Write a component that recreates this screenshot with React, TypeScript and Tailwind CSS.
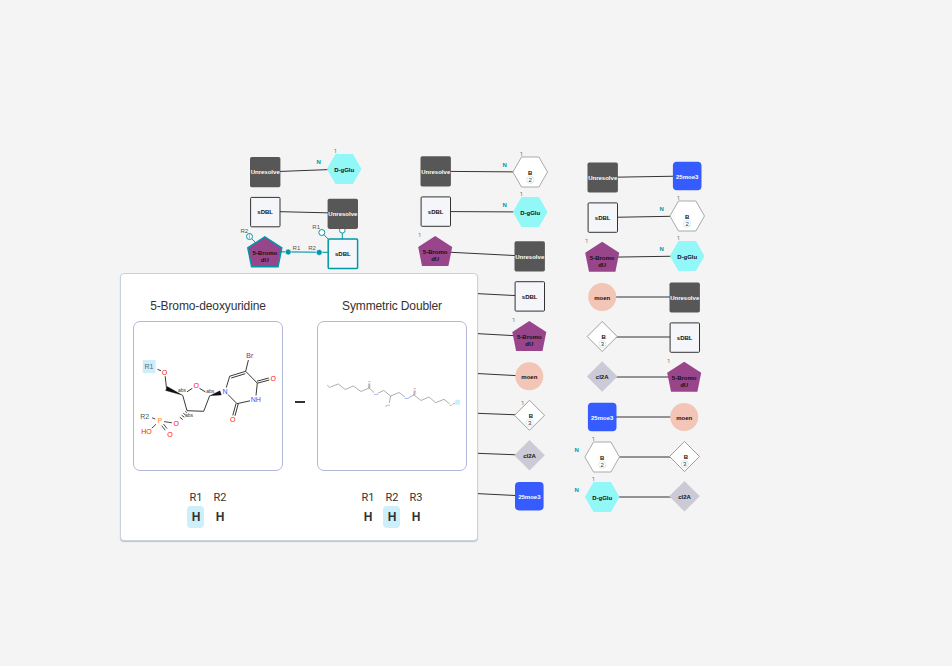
import React from "react";

type Kind = "unresolved" | "sdbl" | "bromo" | "gglu" | "hexB" | "diaB" | "moen" | "cl2a" | "moe3";
type NodeSpec = { kind: Kind; x: number; y: number; active?: boolean };

const label = "font-bold text-[6px]";

function Lines({ x, y, text, fill = "#111" }: { x: number; y: number; text: string; fill?: string }) {
  return (
    <text x={x} y={y} textAnchor="middle" fill={fill} className={label}>
      {text}
    </text>
  );
}

function Ordinal({ x, y }: { x: number; y: number }) {
  return (
    <text x={x} y={y} fill="#777" textAnchor="middle" className="font-['Roboto',sans-serif] text-[6px]">
      1
    </text>
  );
}

function Count({ x, y, n }: { x: number; y: number; n: string }) {
  return (
    <>
      <circle cx={x} cy={y} r={3.6} fill="#fff" stroke="#c4e9ef" strokeWidth={0.8} />
      <text x={x} y={y + 2.2} textAnchor="middle" fill="#333" className="text-[6px]">
        {n}
      </text>
    </>
  );
}

function Monomer({ kind, x, y, active }: NodeSpec) {
  const hex = "-17.3,0 -8.7,-15 8.7,-15 17.3,0 8.7,15 -8.7,15";
  return (
    <g transform={`translate(${x} ${y})`}>
      {kind === "unresolved" && (
        <>
          <rect x={-15.2} y={-15} width={30.4} height={30.2} rx={1.8} fill="#585757" />
          <Lines x={0} y={2.3} text="Unresolve" fill="#fff" />
        </>
      )}
      {kind === "sdbl" && (
        <>
          <rect
            x={-14.6}
            y={-14.6}
            width={29.4}
            height={29.4}
            rx={1}
            fill="#f5f6f9"
            stroke={active ? "#0097a8" : "#333"}
            strokeWidth={active ? 1.5 : 1}
          />
          <Lines x={0} y={2.3} text="sDBL" />
        </>
      )}
      {kind === "bromo" && (
        <>
          <polygon
            points="0,-15.5 17,-4.5 13.2,14.5 -13.2,14.5 -17,-4.5"
            fill="#99458b"
            stroke={active ? "#0097a8" : "none"}
            strokeWidth={1.5}
          />
          <Lines x={0} y={2.6} text="5-Bromo" />
          <Lines x={0} y={9.6} text="dU" />
          {!active && <Ordinal x={-15.5} y={-14.8} />}
        </>
      )}
      {kind === "gglu" && (
        <>
          <polygon points={hex} fill="#92f7f7" />
          <Lines x={0} y={3} text="D-gGlu" />
          <Ordinal x={-8.7} y={-16} />
          <text x={-25.5} y={-5} textAnchor="middle" fill="#0097a8" className={label}>
            N
          </text>
        </>
      )}
      {kind === "hexB" && (
        <>
          <polygon points={hex} fill="#fff" stroke="#aaa" strokeWidth={1} />
          <Lines x={0} y={2.8} text="B" />
          <Count x={0} y={7.8} n="2" />
          <Ordinal x={-8.7} y={-16} />
          <text x={-25.5} y={-5} textAnchor="middle" fill="#0097a8" className={label}>
            N
          </text>
        </>
      )}
      {kind === "diaB" && (
        <>
          <polygon points="0,-15 15,0 0,15 -15,0" fill="#fff" stroke="#888" strokeWidth={0.8} />
          <Lines x={1.5} y={2.6} text="B" />
          <Count x={0.2} y={7.5} n="3" />
        </>
      )}
      {kind === "moen" && (
        <>
          <circle r={14} fill="#f3c5b6" />
          <Lines x={0} y={2.8} text="moen" />
        </>
      )}
      {kind === "cl2a" && (
        <>
          <polygon points="0,-15.3 15.3,0 0,15.3 -15.3,0" fill="#cccad6" />
          <Lines x={0} y={2.6} text="cl2A" />
        </>
      )}
      {kind === "moe3" && (
        <>
          <rect x={-14.3} y={-14.2} width={28.6} height={28.4} rx={4} fill="#365cff" />
          <Lines x={0} y={2.8} text="25moe3" fill="#fff" />
        </>
      )}
    </g>
  );
}

const chains: [NodeSpec, NodeSpec][] = [
  [{ kind: "unresolved", x: 265.2, y: 172 }, { kind: "gglu", x: 344.2, y: 169 }],
  [{ kind: "unresolved", x: 435.7, y: 171.3 }, { kind: "hexB", x: 530.2, y: 172 }],
  [{ kind: "sdbl", x: 435.7, y: 211.5 }, { kind: "gglu", x: 530.2, y: 212 }],
  [{ kind: "bromo", x: 435.2, y: 251.5 }, { kind: "unresolved", x: 529.7, y: 256.3 }],
  [{ kind: "unresolved", x: 435, y: 291.5 }, { kind: "sdbl", x: 529.7, y: 296.3 }],
  [{ kind: "sdbl", x: 435, y: 331.3 }, { kind: "bromo", x: 529.3, y: 336.5 }],
  [{ kind: "sdbl", x: 435, y: 371.3 }, { kind: "moen", x: 529.3, y: 376.3 }],
  [{ kind: "sdbl", x: 435, y: 411.7 }, { kind: "diaB", x: 529.5, y: 415.3 }],
  [{ kind: "sdbl", x: 435, y: 451.7 }, { kind: "cl2a", x: 529.5, y: 455.3 }],
  [{ kind: "sdbl", x: 435, y: 491.5 }, { kind: "moe3", x: 529.3, y: 496.2 }],
  [{ kind: "unresolved", x: 602.7, y: 177.4 }, { kind: "moe3", x: 687.2, y: 176 }],
  [{ kind: "sdbl", x: 602.7, y: 217.5 }, { kind: "hexB", x: 687.2, y: 216 }],
  [{ kind: "bromo", x: 602.2, y: 257.3 }, { kind: "gglu", x: 687.2, y: 256 }],
  [{ kind: "moen", x: 602.2, y: 297 }, { kind: "unresolved", x: 684.7, y: 297.4 }],
  [{ kind: "diaB", x: 602.2, y: 336.5 }, { kind: "sdbl", x: 684.7, y: 337.5 }],
  [{ kind: "cl2a", x: 602.2, y: 376.5 }, { kind: "bromo", x: 684.2, y: 377.3 }],
  [{ kind: "moe3", x: 602.2, y: 417 }, { kind: "moen", x: 684.2, y: 417 }],
  [{ kind: "hexB", x: 602.2, y: 457 }, { kind: "diaB", x: 684.5, y: 456.5 }],
  [{ kind: "gglu", x: 602.2, y: 497 }, { kind: "cl2a", x: 684.5, y: 496.3 }],
];

function Canvas() {
  return (
    <svg width={952} height={666} viewBox="0 0 952 666" className="block font-['Liberation_Sans',Arial,sans-serif]">
      {chains.map(([a, b], i) => {
        const level = i > 12;
        return (
          <g key={i}>
            <line
              x1={a.x}
              y1={level ? Math.round(a.y + 0.1) : a.y}
              x2={b.x}
              y2={level ? Math.round(a.y + 0.1) : b.y}
              stroke="#333"
              strokeWidth={1}
            />
            <Monomer {...a} />
            <Monomer {...b} />
            {i === 7 && <Ordinal x={522.8} y={405} />}
          </g>
        );
      })}
      <line x1={265} y1={211.3} x2={342} y2={213.2} stroke="#333" />
      <Monomer kind="sdbl" x={265.2} y={212} />

      <g stroke="#0097a8" fill="none">
        <line x1={265} y1={251.7} x2={342} y2={252.5} strokeWidth={1.2} />
        <line x1={342.3} y1={233} x2={342.3} y2={240} />
        <circle cx={342.3} cy={230.3} r={2.8} fill="#fff" />
        <line x1={324} y1={234.8} x2={329} y2={240} stroke="#537b82" />
        <circle cx={321.8} cy={232.5} r={3} fill="#fff" />
        <line x1={251.5} y1={238.6} x2={256} y2={243} stroke="#537b82" />
        <circle cx={249.5} cy={236.5} r={3} fill="#fff" />
      </g>
      <line x1={249.5} y1={234.3} x2={249.5} y2={238.5} stroke="#888" strokeWidth={0.7} />
      <circle cx={288.2} cy={252} r={3} fill="#0097a8" stroke="#f4f4f4" strokeWidth={0.7} />
      <circle cx={319.2} cy={252.4} r={3} fill="#0097a8" stroke="#f4f4f4" strokeWidth={0.7} />
      <Monomer kind="unresolved" x={342.8} y={213.7} />
      <Monomer kind="bromo" x={264.8} y={252.3} active />
      <Monomer kind="sdbl" x={342.8} y={253.6} active />
      <g fill="#555" textAnchor="middle" className="text-[6px]">
        <text x={244.3} y={233}>R2</text>
        <text x={316.2} y={229.3}>R1</text>
        <text x={296.4} y={250.3}>R1</text>
        <text x={312} y={250.3}>R2</text>
      </g>
    </svg>
  );
}

function Bromodeoxyuridine() {
  return (
    <svg width={148} height={148} viewBox="134 322 148 148" className="block font-['Liberation_Sans',Arial,sans-serif]">
      <rect x={142.7} y={360} width={13} height={13} rx={1} fill="#cdeffc" />
      <g stroke="#222" strokeWidth={0.9} fill="none">
        <path d="M157.5 369.3L161 370.8M165.2 376.3L166.5 388.5M182.7 395.3L187 410.7L203.7 411.3L209.7 395.7M187 391.8L192.3 388.3M199.5 388.3L205.5 392" />
        <path d="M226.3 387.5L229.7 376.2L245.7 371.3L257.3 383.2L256 395.5M245.7 371.3L248.4 360M231.2 378L245.3 373.7" />
        <path d="M257.3 383.2L269.3 380M256.9 381.2L268.8 378M250 400.8L237 403.7L228 394.5M236 403.5L232.8 415.4M238.2 404L235 415.8" />
        <path d="M152 417.8L155.3 419M164 421.6L172 422.8M156 424.2L151.8 428.2M161.7 425.6L165.2 430.2M163.5 424L167 428.6" strokeWidth={0.8} />
        <path d="M185.3 411.5L186.8 412.6M183.3 413.2L185.5 415M181.6 415.2L184.3 417.3M179.8 417.2L182.7 419.6" strokeWidth={0.9} />
      </g>
      <path d="M182.7 395.3L167.3 386.5L165.6 390.5ZM209.7 395.7L220 390.8L221.4 395Z" fill="#111" stroke="#111" strokeWidth={0.3} />
      <g textAnchor="middle" className="text-[7px]">
        <g fill="#5a6a70">
          <text x={149} y={369.2}>R1</text>
          <text x={144.8} y={419} fill="#555">R2</text>
        </g>
        <g fill="#ff0d0d">
          <text x={164.4} y={375.2}>O</text>
          <text x={196.2} y={388.3}>O</text>
          <text x={273.2} y={381.2}>O</text>
          <text x={232.7} y={422.3}>O</text>
          <text x={176.3} y={426.2}>O</text>
          <text x={170} y={437}>O</text>
          <text x={146.4} y={434.4}>HO</text>
        </g>
        <text x={249.8} y={358.3} fill="#a62929">Br</text>
        <text x={159.8} y={423.4} fill="#ff8000">P</text>
        <g fill="#3050f8">
          <text x={225} y={394}>N</text>
          <text x={255.7} y={402.3}>NH</text>
        </g>
      </g>
      <g textAnchor="middle" fill="#333" className="text-[5px]">
        <text x={182} y={392.3}>abs</text>
        <text x={210.3} y={392.9}>abs</text>
        <text x={189} y={417.2}>abs</text>
      </g>
    </svg>
  );
}

function SymmetricDoubler() {
  return (
    <svg width={148} height={148} viewBox="318 322 148 148" className="block">
      <rect x={455.2} y={399.8} width={5} height={5} fill="#cdeffc" />
      <g fill="none" stroke="#777" strokeWidth={0.6}>
        <path d="M327.2 385.2L329 386.6M330.8 386.8L338.3 384L345.3 389.5L353.3 386L361 391.5L369 388L374 392.5M377.8 393.3L383.7 390.5L390.7 396L399 392.5L405 397M408.5 397.8L414 395L421 400.5L429 397L435.7 402.7L444 399.3L449.7 404M452.5 404.5L455 403" />
        <path d="M368.7 388L368.9 383.5M369.7 388L369.9 383.5M413.8 395L414.2 390.5M414.8 395L415.2 390.5M390.7 396L389.3 403M387.5 405.3L385.3 406.3" />
      </g>
      <g fill="none" strokeWidth={1}>
        <path d="M328.8 387.2h2M368.3 381.7h2.2M413.7 388.7h2.2M388 405.3h2M449.7 405.3h2" stroke="#f3a19e" />
        <path d="M374 394.4h4M404.7 398.5h4" stroke="#a9b7ff" />
      </g>
    </svg>
  );
}

function Monocard({ title, children, groups, selected }: { title: string; children: React.ReactNode; groups: string[]; selected: string }) {
  return (
    <section className="flex w-[150px] flex-col items-center">
      <h2 className="h-[22px] whitespace-nowrap text-[12px] leading-[14px] tracking-[-0.12px]">{title}</h2>
      <div className="size-[150px] shrink-0 overflow-hidden rounded-[7px] border border-[#b3b8d8]">{children}</div>
      <div className="mr-px mt-5 flex gap-[7px]">
        {groups.map((g) => (
          <div key={g} className="flex w-[17px] flex-col items-center">
            <span className="pl-px font-['Roboto',sans-serif] text-[11px] leading-[14px]">{g}</span>
            <span
              className={
                g === selected
                  ? "mt-px flex h-[22px] w-[17px] items-center justify-center rounded-[4px] bg-[#cdeffc] pl-px text-[12px] font-bold"
                  : "mt-px flex h-[22px] w-[17px] items-center justify-center pl-px text-[12px] font-bold"
              }
            >
              H
            </span>
          </div>
        ))}
      </div>
    </section>
  );
}

export default function App() {
  return (
    <main className="relative h-[666px] w-[952px] overflow-hidden bg-[#f4f4f4] font-['Liberation_Sans',Arial,sans-serif] text-[#333]">
      <Canvas />
      <div className="absolute left-[120px] top-[273px] flex h-[268px] w-[358px] rounded-[4px] border border-[#c8d2de] bg-white pl-3 pt-[25px] shadow-[0_1px_1px_rgba(90,110,130,0.35)]">
        <Monocard title="5-Bromo-deoxyuridine" groups={["R1", "R2"]} selected="R1">
          <Bromodeoxyuridine />
        </Monocard>
        <div className="flex w-[34px] justify-center pt-[102px]">
          <span className="h-[2px] w-[10px] bg-[#333]" />
        </div>
        <Monocard title="Symmetric Doubler" groups={["R1", "R2", "R3"]} selected="R2">
          <SymmetricDoubler />
        </Monocard>
      </div>
    </main>
  );
}
